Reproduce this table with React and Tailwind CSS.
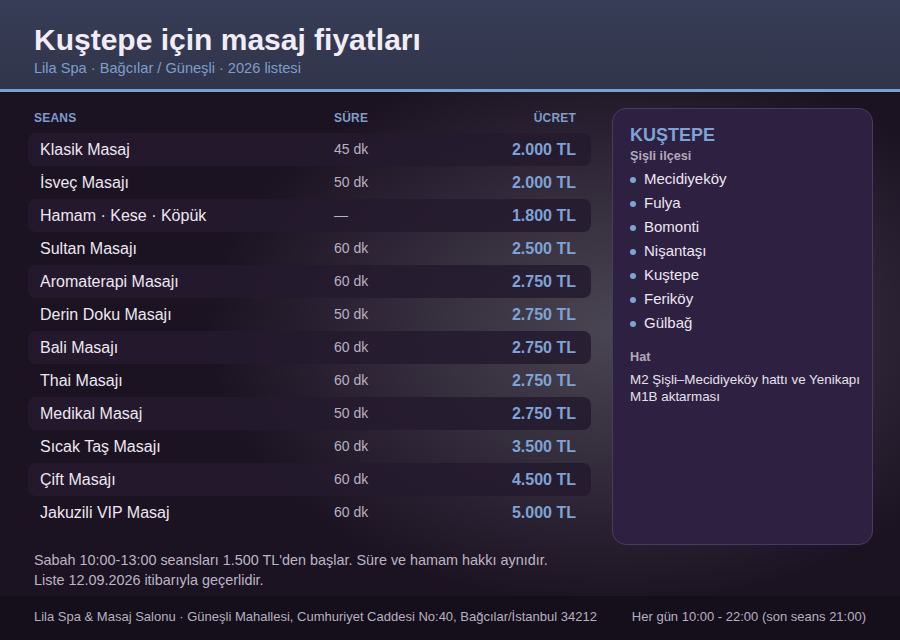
import React from "react";

const rows = [
  ["Klasik Masaj", "45 dk", "2.000 TL"],
  ["İsveç Masajı", "50 dk", "2.000 TL"],
  ["Hamam · Kese · Köpük", "—", "1.800 TL"],
  ["Sultan Masajı", "60 dk", "2.500 TL"],
  ["Aromaterapi Masajı", "60 dk", "2.750 TL"],
  ["Derin Doku Masajı", "50 dk", "2.750 TL"],
  ["Bali Masajı", "60 dk", "2.750 TL"],
  ["Thai Masajı", "60 dk", "2.750 TL"],
  ["Medikal Masaj", "50 dk", "2.750 TL"],
  ["Sıcak Taş Masajı", "60 dk", "3.500 TL"],
  ["Çift Masajı", "60 dk", "4.500 TL"],
  ["Jakuzili VIP Masaj", "60 dk", "5.000 TL"],
];

const places = ["Mecidiyeköy", "Fulya", "Bomonti", "Nişantaşı", "Kuştepe", "Feriköy", "Gülbağ"];

export default function App() {
  return (
    <div className="w-[900px] h-[640px] flex flex-col overflow-hidden font-['Liberation_Sans',Arial,sans-serif] bg-[#1b1322]">
      <header className="h-[89px] bg-gradient-to-b from-[#383d57] to-[#30354b] px-[34px] pt-[22px] flex flex-col">
        <h1 className="text-[30px] leading-[36px] font-bold text-[#f1ecf6]">Kuştepe için masaj fiyatları</h1>
        <p className="text-[14.6px] leading-[18px] text-[#7f9dcb] mt-[1px]">Lila Spa · Bağcılar / Güneşli · 2026 listesi</p>
      </header>
      <div className="h-[3px] bg-[#7ba1d3]" />
      <main className="flex-1 flex flex-col bg-[radial-gradient(ellipse_45%_55%_at_68%_47%,#4a4552_0%,#2f2737_60%,#1b1322_100%)]">
        <div className="flex gap-[21px] pl-[28px] pr-[27px] pt-[16px]">
          <div className="w-[563px] flex flex-col">
            <div className="flex items-start h-[25px] pt-[3px] leading-[14px] pl-[6px] pr-[15px] text-[12px] font-bold uppercase text-[#7f9dcb] tracking-[0.2px]">
              <span className="w-[300px]">Seans</span>
              <span className="flex-1">Süre</span>
              <span className="text-right">Ücret</span>
            </div>
            {rows.map(([name, dur, price], i) => (
              <div
                key={name}
                className={`flex items-center h-[33px] px-[12px] rounded-[8px] ${i % 2 === 0 ? "bg-[#251a2e]/85" : ""}`}
              >
                <span className="w-[294px] text-[16px] text-[#ede7f1]">{name}</span>
                <span className="flex-1 text-[14px] text-[#b9b1c2]">{dur}</span>
                <span className="text-[16px] font-bold text-[#7fa3d6] pr-[3px]">{price}</span>
              </div>
            ))}
          </div>
          <aside className="w-[261px] h-[437px] rounded-[14px] border border-[#4b3b5e] bg-[#2e2041] pl-[17px] pr-[8px] pt-[16px]">
            <h2 className="text-[18px] leading-[20px] font-bold text-[#7fa3d6]">KUŞTEPE</h2>
            <p className="text-[12.7px] leading-[16px] font-bold text-[#b3a9bd] mt-[3px]">Şişli ilçesi</p>
            <ul className="mt-[3px] flex flex-col">
              {places.map((p) => (
                <li key={p} className="flex items-center h-[24px] text-[15px] text-[#ece6f1]">
                  <span className="w-[6px] h-[6px] rounded-full bg-[#7fa3d6] mr-[8px] mt-[2px]" />
                  {p}
                </li>
              ))}
            </ul>
            <p className="text-[12.7px] leading-[16px] font-bold text-[#b3a9bd] mt-[14px]">Hat</p>
            <p className="text-[13.4px] leading-[17px] text-[#e6e0ec] mt-[6px]">M2 Şişli–Mecidiyeköy hattı ve Yenikapı M1B aktarması</p>
          </aside>
        </div>
        <div className="px-[34px] mt-auto pb-[6px] text-[14.4px] leading-[20px] text-[#bdb5c6]">
          <p>Sabah 10:00-13:00 seansları 1.500 TL'den başlar. Süre ve hamam hakkı aynıdır.</p>
          <p>Liste 12.09.2026 itibarıyla geçerlidir.</p>
        </div>
      </main>
      <footer className="h-[44px] bg-[#150f1b] px-[34px] pb-[2px] flex items-center justify-between text-[13px] text-[#b7afc0]">
        <span>Lila Spa &amp; Masaj Salonu · Güneşli Mahallesi, Cumhuriyet Caddesi No:40, Bağcılar/İstanbul 34212</span>
        <span>Her gün 10:00 - 22:00 (son seans 21:00)</span>
      </footer>
    </div>
  );
}
